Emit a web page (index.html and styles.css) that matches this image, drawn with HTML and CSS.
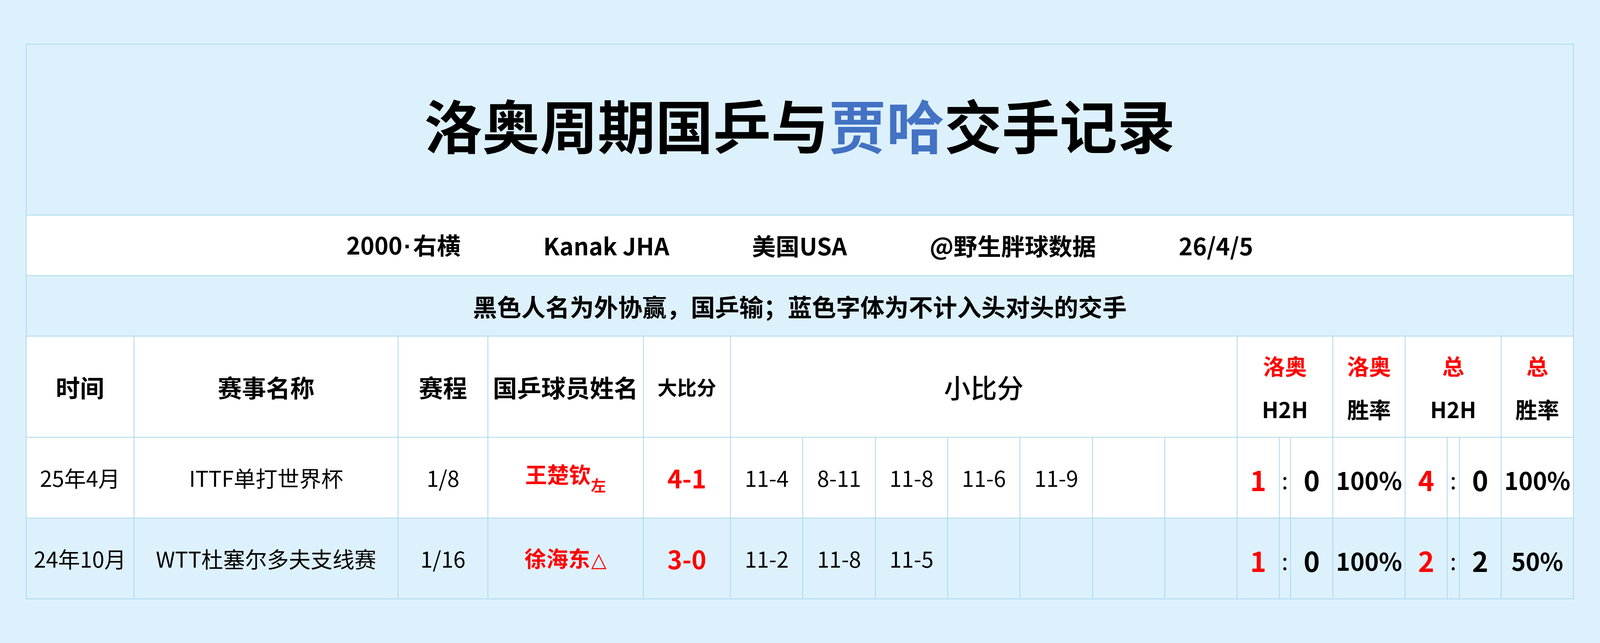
FILE: index.html
```html
<!DOCTYPE html>
<html lang="zh-CN">
<head>
<meta charset="utf-8">
<title>洛奥周期国乒与贾哈交手记录</title>
<link rel="stylesheet" href="styles.css">
</head>
<body>
<div class="sheet">
  <div class="title"><span class="title-text">洛奥周期国乒与<span class="blue">贾哈</span>交手记录</span></div>
  <div class="info">
    <span>2000<span class="dot">·</span>右横</span>
    <span>Kanak JHA</span>
    <span>美国USA</span>
    <span>@野生胖球数据</span>
    <span>26/4/5</span>
  </div>
  <div class="note">黑色人名为外协赢，国乒输；蓝色字体为不计入头对头的交手</div>
  <div class="grid">
    <div class="c hd">时间</div>
    <div class="c hd">赛事名称</div>
    <div class="c hd">赛程</div>
    <div class="c hd">国乒球员姓名</div>
    <div class="c hd small">大比分</div>
    <div class="c games-hd">小比分</div>
    <div class="c stat-hd span3"><span class="red">洛奥</span><span>H2H</span></div>
    <div class="c stat-hd"><span class="red">洛奥</span><span>胜率</span></div>
    <div class="c stat-hd span3"><span class="red">总</span><span>H2H</span></div>
    <div class="c stat-hd"><span class="red">总</span><span>胜率</span></div>

    <div class="c">25年4月</div>
    <div class="c">ITTF单打世界杯</div>
    <div class="c">1/8</div>
    <div class="c name"><span>王楚钦<span class="sub">左</span></span></div>
    <div class="c score">4-1</div>
    <div class="c">11-4</div>
    <div class="c">8-11</div>
    <div class="c">11-8</div>
    <div class="c">11-6</div>
    <div class="c">11-9</div>
    <div class="c"></div>
    <div class="c"></div>
    <div class="c big red">1</div>
    <div class="c colon">:</div>
    <div class="c big">0</div>
    <div class="c pct">100%</div>
    <div class="c big red">4</div>
    <div class="c colon">:</div>
    <div class="c big">0</div>
    <div class="c pct">100%</div>

    <div class="c alt">24年10月</div>
    <div class="c alt">WTT杜塞尔多夫支线赛</div>
    <div class="c alt">1/16</div>
    <div class="c alt name"><span>徐海东<span class="tri">△</span></span></div>
    <div class="c alt score">3-0</div>
    <div class="c alt">11-2</div>
    <div class="c alt">11-8</div>
    <div class="c alt">11-5</div>
    <div class="c alt"></div>
    <div class="c alt"></div>
    <div class="c alt"></div>
    <div class="c alt"></div>
    <div class="c alt big red">1</div>
    <div class="c alt colon">:</div>
    <div class="c alt big">0</div>
    <div class="c alt pct">100%</div>
    <div class="c alt big red">2</div>
    <div class="c alt colon">:</div>
    <div class="c alt big">2</div>
    <div class="c alt pct">50%</div>
  </div>
</div>
</body>
</html>
```
FILE: styles.css
```css
:root {
  --x: calc(100vw / 6871);
  --y: calc(100vh / 1647);
  --bg: #ddf1fd;
  --line: #a9d9eb;
  --red: #ff0000;
  --blue: #4472c4;
}
* { box-sizing: border-box; }
html, body {
  margin: 0;
  padding: 0;
  background: var(--bg);
  overflow: hidden;
}
body {
  font-family: "Noto Sans CJK SC", "Noto Sans", sans-serif;
  color: #000;
  width: 100vw;
  height: 100vh;
}
.sheet {
  margin: calc(112 * var(--y)) calc(112 * var(--x)) 0 calc(110 * var(--x));
}
.title {
  height: calc(440 * var(--y));
  border: 2px solid var(--line);
  background: var(--bg);
  display: flex;
  align-items: center;
  justify-content: center;
  padding-bottom: calc(28 * var(--y));
  white-space: nowrap;
}
.title-text {
  font-size: calc(248 * var(--x));
  font-weight: 700;
  line-height: 1;
}
.blue { color: var(--blue); }
.red { color: var(--red); }
.info {
  height: calc(155 * var(--y));
  border: 2px solid var(--line);
  border-top: none;
  background: #fff;
  display: flex;
  align-items: center;
  justify-content: center;
  gap: calc(355 * var(--x));
  font-size: calc(102 * var(--x));
  font-weight: 700;
  line-height: 1;
  white-space: nowrap;
}
.dot {
  font-family: "Liberation Sans", sans-serif;
  margin: 0 calc(6 * var(--x));
}
.note {
  height: calc(155 * var(--y));
  border: 2px solid var(--line);
  border-top: none;
  background: var(--bg);
  display: flex;
  align-items: center;
  justify-content: center;
  font-size: calc(104 * var(--x));
  font-weight: 700;
  line-height: 1;
  white-space: nowrap;
}
.grid {
  display: grid;
  grid-template-columns: 464fr 1135fr 385fr 668fr 375fr 311fr 311fr 311fr 311fr 311fr 311fr 310fr 182fr 48fr 182fr 311fr 180fr 52fr 180fr 311fr;
  grid-template-rows: calc(259 * var(--y)) calc(207 * var(--y)) calc(207 * var(--y));
  border-left: 2px solid var(--line);
}
.c {
  min-width: 0;
  border-right: 2px solid var(--line);
  border-bottom: 2px solid var(--line);
  background: #fff;
  display: flex;
  align-items: center;
  justify-content: center;
  text-align: center;
  white-space: nowrap;
  font-size: calc(94 * var(--x));
  line-height: 1;
}
.c.alt { background: var(--bg); }
.hd {
  font-size: calc(104 * var(--x));
  font-weight: 700;
}
.hd.small { font-size: calc(84 * var(--x)); }
.games-hd {
  grid-column: span 7;
  font-size: calc(114 * var(--x));
  font-weight: 500;
}
.stat-hd {
  flex-direction: column;
  font-size: calc(94 * var(--x));
  font-weight: 700;
}
.stat-hd span {
  line-height: calc(111 * var(--y));
}
.span3 { grid-column: span 3; }
.name {
  color: var(--red);
  font-weight: 700;
}
.sub {
  font-size: calc(64 * var(--x));
  vertical-align: calc(-35 * var(--x));
}
.tri {
  font-weight: 400;
  font-family: "DejaVu Sans", sans-serif;
  font-size: calc(86 * var(--x));
  margin-left: calc(4 * var(--x));
}
.score {
  color: var(--red);
  font-weight: 700;
  font-size: calc(108 * var(--x));
}
.big {
  font-size: calc(118 * var(--x));
  font-weight: 700;
  padding-top: calc(8 * var(--y));
}
.colon {
  font-size: calc(100 * var(--x));
  padding-top: calc(8 * var(--y));
}
.pct {
  font-size: calc(104 * var(--x));
  font-weight: 700;
  padding-top: calc(8 * var(--y));
}
```
